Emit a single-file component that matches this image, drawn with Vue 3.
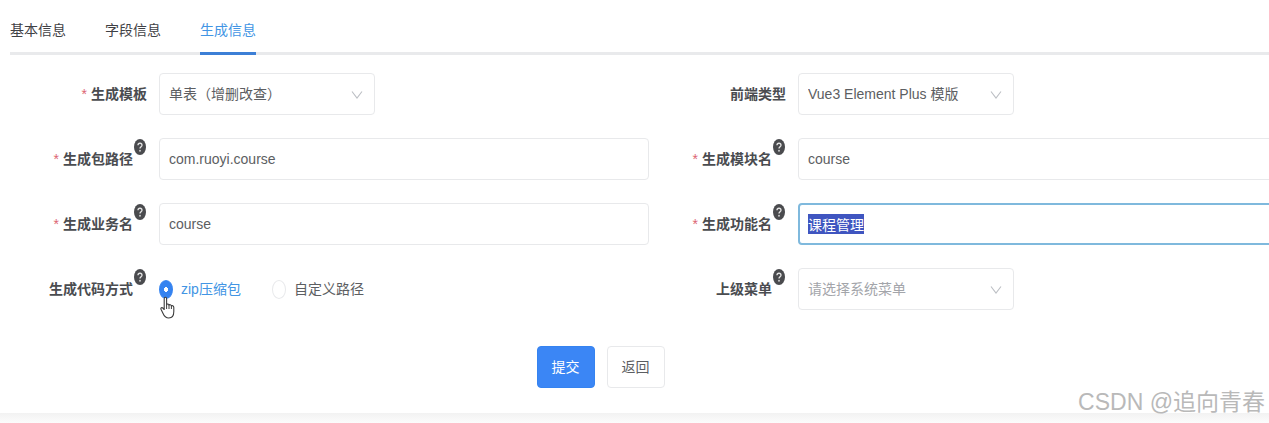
<template>
  <div class="page">
    <main class="card">
      <nav class="tabs">
        <a
          v-for="tab in tabs"
          :key="tab"
          href="#"
          class="tab"
          :class="{ 'is-active': tab === activeTab }"
          @click.prevent="activeTab = tab"
          >{{ tab }}</a
        >
      </nav>

      <form class="gen-form" @submit.prevent>
        <div class="form-grid">
          <div v-for="item in fields" :key="item.id" class="form-item">
            <component
              :is="item.type === 'radio' ? 'span' : 'label'"
              :id="`${item.id}-label`"
              class="form-label"
              :for="item.type === 'radio' ? undefined : item.id"
            >
              <span v-if="item.required" class="star">*</span>
              <span>{{ item.label }}</span>
              <svg v-if="item.help" class="help" viewBox="0 0 12 16">
                <ellipse cx="6" cy="8" rx="6" ry="8" fill="#4a4b4e" />
                <path
                  d="M4 6.2C4 3.6 8 3.6 8 6.2C8 7.8 6 7.8 6 9.6"
                  fill="none"
                  stroke="#e4e4e4"
                  stroke-width="1.3"
                />
                <ellipse cx="6" cy="11.8" rx="0.8" ry="1" fill="#e4e4e4" />
              </svg>
            </component>

            <div v-if="item.type === 'select'" class="select-box">
              <select
                :id="item.id"
                v-model="form[item.id]"
                class="control"
                :class="{ 'is-placeholder': item.placeholder }"
              >
                <option :value="form[item.id]">
                  {{ item.placeholder || form[item.id] }}
                </option>
              </select>
              <svg class="arrow" viewBox="0 0 12 10">
                <path
                  d="M1 1.5L6 8L11 1.5"
                  fill="none"
                  stroke="#bcbfc4"
                  stroke-width="1.1"
                />
              </svg>
            </div>

            <div
              v-else-if="item.type === 'radio'"
              class="radio-group"
              role="radiogroup"
              :aria-labelledby="`${item.id}-label`"
            >
              <label
                v-for="option in item.options"
                :key="option.value"
                class="radio"
              >
                <input
                  v-model="form[item.id]"
                  type="radio"
                  :name="item.id"
                  :value="option.value"
                />
                <span>{{ option.label }}</span>
              </label>
              <svg class="pointer" viewBox="0 0 15 23">
                <path
                  d="M4.2 13.5V2.8C4.2 0.8 6.6 0.8 6.6 2.8V9C6.8 7.6 9 7.7 9 9.5C9.3 8.2 11.4 8.4 11.4 10.2C11.8 9.2 13.8 9.5 13.8 11.4V15.5C13.8 19.5 12.2 22 8.8 22C5.4 22 4 19.8 2.8 17L1 13.2C0.5 11.8 2 11.1 2.8 12Z"
                  fill="#fff"
                  stroke="#3d3d3d"
                  stroke-width="1.1"
                  stroke-linejoin="round"
                />
                <path
                  d="M6.6 9V13M9 9.5V13M11.4 10.2V13"
                  fill="none"
                  stroke="#3d3d3d"
                  stroke-width="1"
                />
              </svg>
            </div>

            <input
              v-else
              :id="item.id"
              v-model="form[item.id]"
              type="text"
              class="control"
            />
          </div>
        </div>

        <div class="actions">
          <button type="submit" class="btn btn-primary">提交</button>
          <button type="button" class="btn">返回</button>
        </div>
      </form>
    </main>
    <span class="watermark">CSDN @追向青春</span>
  </div>
</template>

<script setup>
import { onMounted, reactive, ref } from 'vue';

const tabs = ['基本信息', '字段信息', '生成信息'];
const activeTab = ref('生成信息');

const form = reactive({
  tplCategory: '单表（增删改查）',
  tplWebType: 'Vue3 Element Plus 模版',
  packageName: 'com.ruoyi.course',
  moduleName: 'course',
  businessName: 'course',
  functionName: '课程管理',
  genType: '0',
  parentMenuId: '',
});

const fields = [
  { id: 'tplCategory', label: '生成模板', type: 'select', required: true },
  { id: 'tplWebType', label: '前端类型', type: 'select' },
  { id: 'packageName', label: '生成包路径', required: true, help: true },
  { id: 'moduleName', label: '生成模块名', required: true, help: true },
  { id: 'businessName', label: '生成业务名', required: true, help: true },
  { id: 'functionName', label: '生成功能名', required: true, help: true },
  {
    id: 'genType',
    label: '生成代码方式',
    type: 'radio',
    help: true,
    options: [
      { value: '0', label: 'zip压缩包' },
      { value: '1', label: '自定义路径' },
    ],
  },
  {
    id: 'parentMenuId',
    label: '上级菜单',
    type: 'select',
    help: true,
    placeholder: '请选择系统菜单',
  },
];

// 默认选中功能名，方便直接修改
onMounted(() => {
  const input = document.getElementById('functionName');
  input.focus({ preventScroll: true });
  input.select();
});
</script>

<style>
body {
  margin: 0;
  background: #fff;
}
</style>

<style scoped>
.page {
  position: relative;
  min-height: 100vh;
  overflow: clip;
  box-sizing: border-box;
  font-family: 'Liberation Sans', 'Noto Sans CJK SC', sans-serif;
  font-size: 14px;
  line-height: 20px;
  color: #5c5e62;
  background: linear-gradient(#f2f2f2, #fcfcfc) bottom / 100% 10px no-repeat;
}

.card {
  padding: 0 0 25px 10px;
  background: #fff;
}

.tabs {
  display: flex;
  gap: 39px;
  height: 52px;
  border-bottom: 3px solid #e9eaec;
}

.tab {
  height: 52px;
  box-sizing: content-box;
  margin-bottom: -3px;
  border-bottom: 3px solid transparent;
  line-height: 61px;
  color: #3f4145;
  text-decoration: none;
}

.tab.is-active {
  color: #4295e4;
  border-bottom-color: #3c7fd6;
}

/* 右侧输入框延伸到可视区域之外 */
.gen-form {
  margin-right: -19px;
  padding-top: 18px;
}

.form-grid {
  display: grid;
  grid-template-columns: 1fr 1fr;
  row-gap: 23px;
}

.form-item {
  display: flex;
  align-items: center;
  height: 42px;
}

.form-label {
  display: flex;
  align-items: center;
  justify-content: flex-end;
  flex: none;
  width: 149px;
  height: 42px;
  box-sizing: border-box;
  padding-right: 12px;
  font-weight: 700;
  color: #4a4c50;
}

.star {
  margin-right: 4px;
  font-weight: 400;
  color: #dc6673;
}

.help {
  align-self: flex-start;
  width: 12px;
  height: 16px;
  margin: 1px 1px 0;
}

.control {
  flex: 1;
  min-width: 0;
  height: 42px;
  box-sizing: border-box;
  padding: 0 9px;
  border: 1px solid #e8e9eb;
  border-radius: 4px;
  outline: none;
  background: #fff;
  font: inherit;
  color: inherit;
}

.control:focus {
  border: 2px solid #7fb9dd;
  padding: 0 8px;
}

.control::selection {
  color: #fff;
  background: #3f55c0;
}

.select-box {
  position: relative;
  width: 216px;
}

.select-box .control {
  display: block;
  width: 100%;
  appearance: none;
}

.select-box .is-placeholder {
  color: #a3a5aa;
}

.arrow {
  position: absolute;
  top: 17px;
  right: 12px;
  width: 12px;
  height: 10px;
  pointer-events: none;
}

.radio-group {
  position: relative;
  display: flex;
  gap: 31px;
}

.radio {
  display: flex;
  align-items: center;
  gap: 8px;
}

.radio input {
  width: 14px;
  height: 19px;
  margin: 0;
  appearance: none;
  border: 1px solid #e8e9eb;
  border-radius: 50%;
  background: #fff;
}

.radio input:checked {
  border-color: #3583f0;
  background: radial-gradient(ellipse 2px 3px, #fff 90%, #3583f0);
}

.radio input:checked + span {
  color: #4295e4;
}

.pointer {
  position: absolute;
  top: 17px;
  left: 1px;
  width: 15px;
  height: 23px;
}

.actions {
  display: flex;
  justify-content: center;
  gap: 12px;
  padding: 36px 97px 0 0;
}

.btn {
  height: 42px;
  padding: 0 14px;
  border: 1px solid #e8e9eb;
  border-radius: 4px;
  background: #fff;
  font: inherit;
  color: inherit;
}

.btn-primary {
  border-color: #3583f0;
  background: #3b86f5;
  color: #fff;
}

.watermark {
  position: absolute;
  right: 4px;
  bottom: 6px;
  font-size: 23px;
  line-height: 30px;
  color: #b9b9b9;
  pointer-events: none;
}
</style>
